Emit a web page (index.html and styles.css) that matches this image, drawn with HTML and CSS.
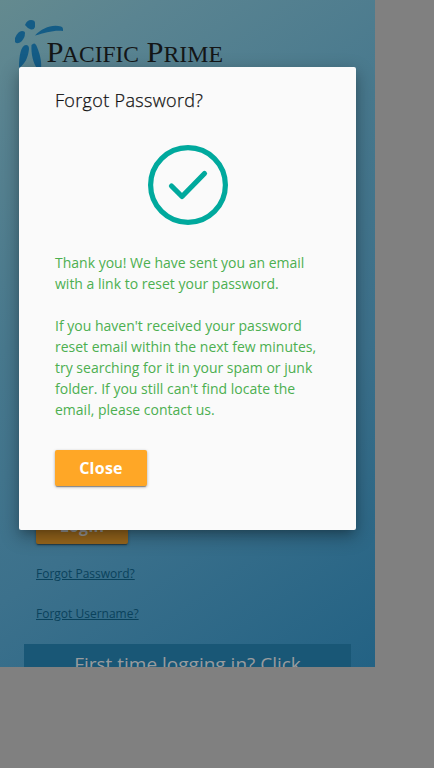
FILE: index.html
```html
<!DOCTYPE html>
<html lang="en">
<head>
<meta charset="utf-8">
<title>Pacific Prime</title>
<link rel="stylesheet" href="styles.css">
</head>
<body>
<main class="page">
  <header class="header">
    <svg class="logo" viewBox="0 0 225 70" role="img" aria-label="Pacific Prime">
      <g fill="#145c86">
        <path d="M25 25Q27 20 31 20Q35 20 35 23V27Q34 30 31 29.500Q28 29 25 25Z"/>
        <path d="M15 42V38Q18 31 22 31Q25 31 25 33Q25 39 20 42.500Q16 44 15 42Z"/>
        <path d="M35 35.500C42 28 52 24 61 26.500Q63 27 63 29V31C53 30 45 33 35 35.500Z"/>
        <path d="M19 67C19 56 21 45 26 45Q29 45 29 49C28 59 24 64 20.500 67V70H19Z"/>
        <path d="M31.500 45Q35 41 37 47C40 54 42 62 41 70H38C33 63 31 54 31.500 45Z"/>
      </g>
      <g class="wordmark">
        <text x="46.500" y="61.500" font-size="29.500" textLength="17" lengthAdjust="spacingAndGlyphs">P</text>
        <text x="62" y="61.500" font-size="22.500" textLength="77" lengthAdjust="spacingAndGlyphs">ACIFIC</text>
        <text x="146.500" y="61.500" font-size="29.500" textLength="17" lengthAdjust="spacingAndGlyphs">P</text>
        <text x="163.500" y="61.500" font-size="22.500" textLength="59.500" lengthAdjust="spacingAndGlyphs">RIME</text>
      </g>
    </svg>
  </header>
  <section class="login">
    <button class="button button-dim">Login</button>
    <a class="link" href="#">Forgot Password?</a>
    <a class="link" href="#">Forgot Username?</a>
  </section>
  <section class="banner">First time logging in? Click</section>
</main>
<div class="overlay">
  <section class="dialog" role="dialog" aria-labelledby="title">
    <h1 class="title" id="title">Forgot Password?</h1>
    <svg class="success" viewBox="0 0 80 80" aria-hidden="true">
      <circle cx="40" cy="40" r="37.400"/>
      <path d="M23.500 41L34 51.500L56.500 28.500"/>
    </svg>
    <p class="message">Thank you! We have sent you an email<br>with a link to reset your password.</p>
    <p class="message">If you haven't received your password<br>reset email within the next few minutes,<br>try searching for it in your spam or junk<br>folder. If you still can't find locate the<br>email, please contact us.</p>
    <button class="button">Close</button>
  </section>
</div>
</body>
</html>
```
FILE: styles.css
```css
* { box-sizing: border-box; }
html, body { margin: 0; height: 100%; overflow: hidden; }
body {
  background: #808080;
  font-family: "Open Sans", "Noto Sans", sans-serif;
}
.page {
  display: flex;
  flex-direction: column;
  width: 375px;
  height: 667px;
  overflow: hidden;
  background: linear-gradient(145deg, #648a8f 0%, #5a8491 12%, #48798e 38%, #3c718c 65%, #236284 100%);
}
.header { height: 70px; flex: none; }
.logo { display: block; width: 225px; height: 70px; }
.wordmark {
  fill: #141617;
  font-family: "Liberation Serif", serif;
}
.login {
  display: flex;
  flex-direction: column;
  align-items: flex-start;
  flex: none;
  height: 574px;
  padding: 438px 36px 0;
}
.button {
  width: 92px;
  height: 36px;
  flex: none;
  padding: 0;
  border: 0;
  border-radius: 2px;
  background: #ffa726;
  color: #fff;
  font: 700 16px/36px "Open Sans", sans-serif;
  letter-spacing: .25px;
  box-shadow: 0 1px 3px rgba(0, 0, 0, .35), 0 2px 1px -1px rgba(0, 0, 0, .3);
}
.button-dim { background: #97661c; color: #999; }
.link {
  margin-top: 20px;
  color: #0a425c;
  font-size: 12px;
  line-height: 20px;
}
.banner {
  flex: none;
  height: 70px;
  margin: 0 24px;
  padding-top: 6px;
  background: #195776;
  color: #999c9e;
  font-size: 19px;
  line-height: 28px;
  text-align: center;
}
.overlay {
  position: absolute;
  top: 0;
  left: 0;
  display: flex;
  align-items: flex-start;
  justify-content: center;
  width: 375px;
  height: 667px;
  padding-top: 67px;
  overflow: hidden;
}
.dialog {
  width: 337px;
  height: 463px;
  padding: 19px 36px 0;
  border-radius: 2px;
  background: #fafafa;
  box-shadow: 0 5px 9px -4px rgba(0, 0, 0, .2), 0 6px 18px 1px rgba(0, 0, 0, .3);
}
.title {
  margin: 0;
  color: #111;
  font-size: 18px;
  font-weight: 300;
  letter-spacing: .33px;
  line-height: 28px;
  -webkit-text-stroke: .25px #111;
}
.success {
  display: block;
  width: 80px;
  height: 80px;
  margin: 31px auto 27px;
  fill: none;
  stroke: #00a99d;
  stroke-width: 5.2;
  stroke-linecap: round;
  stroke-linejoin: round;
}
.message {
  margin: 0 0 21px;
  color: #4caf50;
  font-size: 14px;
  line-height: 21px;
  white-space: nowrap;
}
.dialog .button { margin-top: 9px; }
```
